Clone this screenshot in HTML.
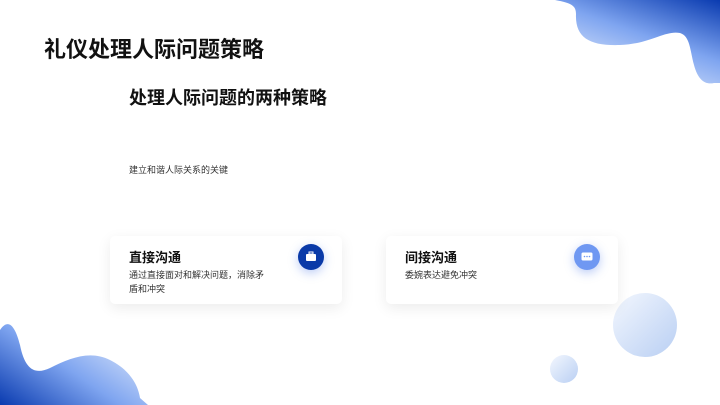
<!DOCTYPE html>
<html><head><meta charset="utf-8"><style>
body{margin:0;width:720px;height:405px;overflow:hidden;background:#fff;position:relative;font-family:"Liberation Sans","Noto Sans CJK SC",sans-serif;color:#111}
.abs{position:absolute}
.card{position:absolute;background:#fff;border-radius:5px;box-shadow:0 4px 14px rgba(0,0,0,0.08)}
.card h3{margin:0;position:absolute;left:19px;top:11px;font-size:13px;font-weight:700}
.card p{margin:0;position:absolute;left:19px;top:32px;font-size:9px;line-height:14px;color:#333;width:142px}
.ic{position:absolute;width:26px;height:26px;border-radius:50%;box-shadow:0 3px 10px rgba(60,110,230,0.35)}
</style></head><body>
<svg class="abs" style="left:0;top:0" width="720" height="405">
<defs>
<linearGradient id="g1" x1="1" y1="0" x2="0.3" y2="1"><stop offset="0" stop-color="#0a3bb0"/><stop offset="0.5" stop-color="#7fa5f0"/><stop offset="1" stop-color="#e6eefc"/></linearGradient>
<linearGradient id="g2" x1="0" y1="1" x2="1" y2="0.2"><stop offset="0" stop-color="#0a3bb0"/><stop offset="0.5" stop-color="#7fa5f0"/><stop offset="1" stop-color="#e6eefc"/></linearGradient>
<linearGradient id="g3" x1="0" y1="0" x2="1" y2="1"><stop offset="0" stop-color="#f3f7fe"/><stop offset="1" stop-color="#b9cff3"/></linearGradient>
</defs>
<path d="M555,0 C572,3 576,6 576,14 C575,38 590,46 620,45 C650,44 665,30 680,33 C690,36 690,50 694,65 C698,80 705,85 714,83 L720,83 L720,0 Z" fill="url(#g1)"/>
<path d="M0,330 C8,318 15,325 20,345 C25,370 35,375 50,368 C70,358 90,350 110,360 C130,370 138,385 140,398 L148,405 L0,405 Z" fill="url(#g2)"/>
<ellipse cx="645" cy="325" rx="32" ry="32" fill="url(#g3)"/>
<ellipse cx="564" cy="369" rx="14" ry="14" fill="url(#g3)"/>
</svg>
<div class="abs" style="left:44px;top:32px;font-size:22px;font-weight:700">礼仪处理人际问题策略</div>
<div class="abs" style="left:129px;top:84px;font-size:18px;font-weight:700">处理人际问题的两种策略</div>
<div class="abs" style="left:129px;top:163px;font-size:9px;color:#333">建立和谐人际关系的关键</div>
<div class="card" style="left:110px;top:236px;width:232px;height:68px">
<h3>直接沟通</h3><p>通过直接面对和解决问题，消除矛盾和冲突</p>
<div class="ic" style="left:188px;top:8px;background:#0a3aa8"><svg width="26" height="26"><rect x="8" y="10" width="10" height="7" rx="1" fill="#fff"/><rect x="11" y="8" width="4" height="2" fill="none" stroke="#fff"/></svg></div>
</div>
<div class="card" style="left:386px;top:236px;width:232px;height:68px">
<h3>间接沟通</h3><p>委婉表达避免冲突</p>
<div class="ic" style="left:188px;top:8px;background:#6f98f2"><svg width="26" height="26"><rect x="7.5" y="8.5" width="11" height="8" rx="1.5" fill="#fff"/><circle cx="10.5" cy="12.5" r=".8" fill="#6f98f2"/><circle cx="13" cy="12.5" r=".8" fill="#6f98f2"/><circle cx="15.5" cy="12.5" r=".8" fill="#6f98f2"/></svg></div>
</div>
</body></html>
